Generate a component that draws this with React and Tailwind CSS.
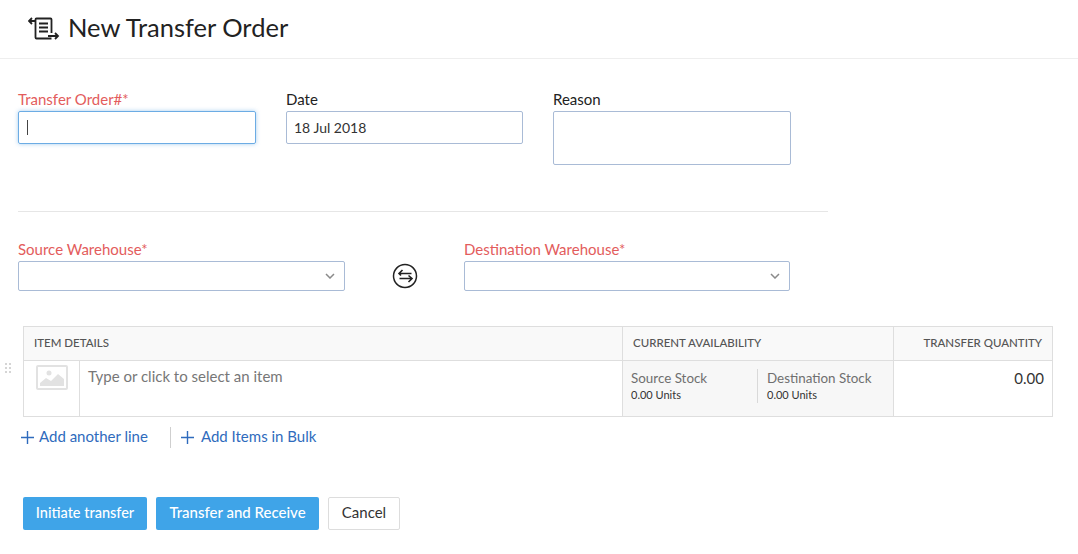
const FONT = { fontFamily: "Lato, 'Open Sans', sans-serif" };

function OrderIcon() {
  return (
    <svg width="32" height="26" viewBox="0 0 32 26" fill="none" stroke="#222" strokeWidth="1.8">
      <path d="M7.500 8V3.500q0-1 1-1h14q1 0 1 1V17M7.500 8v13.500q0 1 1 1h15" />
      <path d="M11 7.500h9M11 11.500h9M11 15.500h9" strokeWidth="2" />
      <path d="M1 5h6M4 2 1 5l3 3" />
      <path d="M20 20h10M27 17l3 3-3 3" />
    </svg>
  );
}

function SwapIcon() {
  return (
    <svg width="26" height="26" viewBox="0 0 26 26" fill="none" stroke="#222" strokeWidth="1.6">
      <circle cx="13" cy="13" r="11.500" strokeWidth="1.500" />
      <path d="M19.500 10.500H7M10.500 7 7 10.500 9 12.500" />
      <path d="M7.500 15.500H20M16.500 12.500l3.500 3-3.500 3.500" />
    </svg>
  );
}

function Chevron() {
  return (
    <svg width="10" height="6" viewBox="0 0 10 6" fill="none" stroke="#8a8a8a" strokeWidth="1.500">
      <path d="M1 1l4 4 4-4" />
    </svg>
  );
}

function ImagePlaceholder() {
  return (
    <svg width="32" height="25" viewBox="0 0 32 25" fill="none">
      <rect x="1" y="1" width="30" height="23" stroke="#e2e2e2" strokeWidth="2" rx="1" />
      <circle cx="13" cy="8" r="2.500" fill="#e2e2e2" />
      <path d="M4 21v-3l6-5 5 3 7-7 6 5v7z" fill="#e2e2e2" />
    </svg>
  );
}

function Plus() {
  return (
    <svg width="13" height="13" viewBox="0 0 13 13" stroke="#2f6bbd" strokeWidth="1.400">
      <path d="M6.500 0v13M0 6.500h13" />
    </svg>
  );
}

function Select({ className }) {
  return (
    <div className={`flex h-[30px] items-center justify-end rounded-[2px] border border-[#a9bbd6] pr-[9px] ${className}`}>
      <Chevron />
    </div>
  );
}

function Stock({ label, className }) {
  return (
    <div className={className}>
      <div className="text-[13.400px] leading-[17px] text-[#6f6f6f]">{label}</div>
      <div className="text-[11px] leading-[15px] text-[#333]">0.00 Units</div>
    </div>
  );
}

export default function App() {
  return (
    <div className="h-[554px] w-[1078px] overflow-hidden bg-white text-[#222]" style={FONT}>
      <header className="flex h-[59px] items-center gap-[8px] border-b border-[#eeeeee] pl-[28px]">
        <OrderIcon />
        <h1 className="mb-[2px] text-[25.500px] font-normal leading-none">New Transfer Order</h1>
      </header>

      <div className="pl-[18px] pt-[33px]">
        <div className="flex gap-[30px] text-[15px]">
          <div className="w-[238px]">
            <label className="block h-[19px] leading-[15px] text-[#e35c5c]">Transfer Order#*</label>
            <div className="flex h-[33px] items-center rounded-[2px] border border-[#6cace4] pl-[8px] shadow-[0_0_4px_rgba(108,172,228,0.6)]">
              <span className="h-[15px] w-px bg-[#444]" />
            </div>
          </div>
          <div className="w-[237px]">
            <label className="block h-[19px] leading-[15px]">Date</label>
            <div className="flex h-[33px] items-center rounded-[2px] border border-[#a9bbd6] pl-[7px] text-[14px] text-[#333]">18 Jul 2018</div>
          </div>
          <div className="w-[238px]">
            <label className="block h-[19px] leading-[15px]">Reason</label>
            <div className="h-[54px] rounded-[2px] border border-[#a9bbd6]" />
          </div>
        </div>

        <div className="mt-[46px] h-px w-[810px] bg-[#e6e6e6]" />

        <div className="mt-[29px] flex text-[15px]">
          <div className="w-[327px]">
            <label className="block h-[20px] leading-[17px] text-[#e35c5c]">Source Warehouse*</label>
            <Select />
          </div>
          <div className="flex w-[119px] items-end justify-center pb-[2px]">
            <SwapIcon />
          </div>
          <div className="w-[326px]">
            <label className="block h-[20px] leading-[17px] text-[#e35c5c]">Destination Warehouse*</label>
            <Select />
          </div>
        </div>
      </div>

      <div className="relative ml-[23px] mt-[35px] w-[1030px] border border-[#dedede]">
        <div className="absolute left-[-19px] top-[36px] grid grid-cols-2 gap-[2px]">
          {[0, 1, 2, 3, 4, 5].map((i) => (
            <span key={i} className="h-[2px] w-[2px] bg-[#d5d5d5]" />
          ))}
        </div>
        <div className="flex h-[34px] items-center border-b border-[#dedede] bg-[#f9f9f9] text-[11.500px] font-medium text-[#555]">
          <div className="flex h-full w-[598px] items-center pb-[1px] pl-[10px]">ITEM DETAILS</div>
          <div className="flex h-full w-[271px] items-center border-l border-[#dedede] pb-[1px] pl-[10px]">CURRENT AVAILABILITY</div>
          <div className="flex h-full flex-1 items-center justify-end border-l border-[#dedede] pb-[1px] pr-[10px]">TRANSFER QUANTITY</div>
        </div>
        <div className="flex h-[55px]">
          <div className="w-[56px] border-r border-[#dedede] pl-[12px] pt-[4px]">
            <ImagePlaceholder />
          </div>
          <div className="w-[542px] pl-[8px] pt-[6px] text-[15px] leading-[18px] text-[#777]">Type or click to select an item</div>
          <div className="flex w-[271px] border-l border-[#dedede] bg-[#f7f7f7] pl-[8px] pt-[8px]">
            <Stock label="Source Stock" className="h-[34px] w-[127px] border-r border-[#d9d9d9] pt-[1px]" />
            <Stock label="Destination Stock" className="pl-[9px] pt-[1px]" />
          </div>
          <div className="flex-1 border-l border-[#dedede] pr-[8px] pt-[8px] text-right text-[15px] leading-[18px] text-[#333]">0.00</div>
        </div>
      </div>

      <div className="ml-[21px] mt-[9px] flex h-[22px] items-center text-[15px] text-[#2f6bbd]">
        <Plus />
        <span className="ml-[5px] pb-[1px]">Add another line</span>
        <span className="ml-[22px] h-[21px] w-px bg-[#cfcfcf]" />
        <span className="ml-[10px]"><Plus /></span>
        <span className="ml-[7px] pb-[1px]">Add Items in Bulk</span>
      </div>

      <div className="ml-[23px] mt-[49px] flex gap-[9px] text-[15px]">
        <button className="h-[33px] w-[124px] rounded-[2px] bg-[#3fa4e8] pb-[2px] text-[14.500px] font-medium text-white">Initiate transfer</button>
        <button className="h-[33px] w-[163px] rounded-[2px] bg-[#3fa4e8] pb-[2px] font-medium text-white">Transfer and Receive</button>
        <button className="h-[33px] w-[72px] rounded-[2px] border border-[#dddddd] bg-white pb-[2px] text-[#333]">Cancel</button>
      </div>
    </div>
  );
}
